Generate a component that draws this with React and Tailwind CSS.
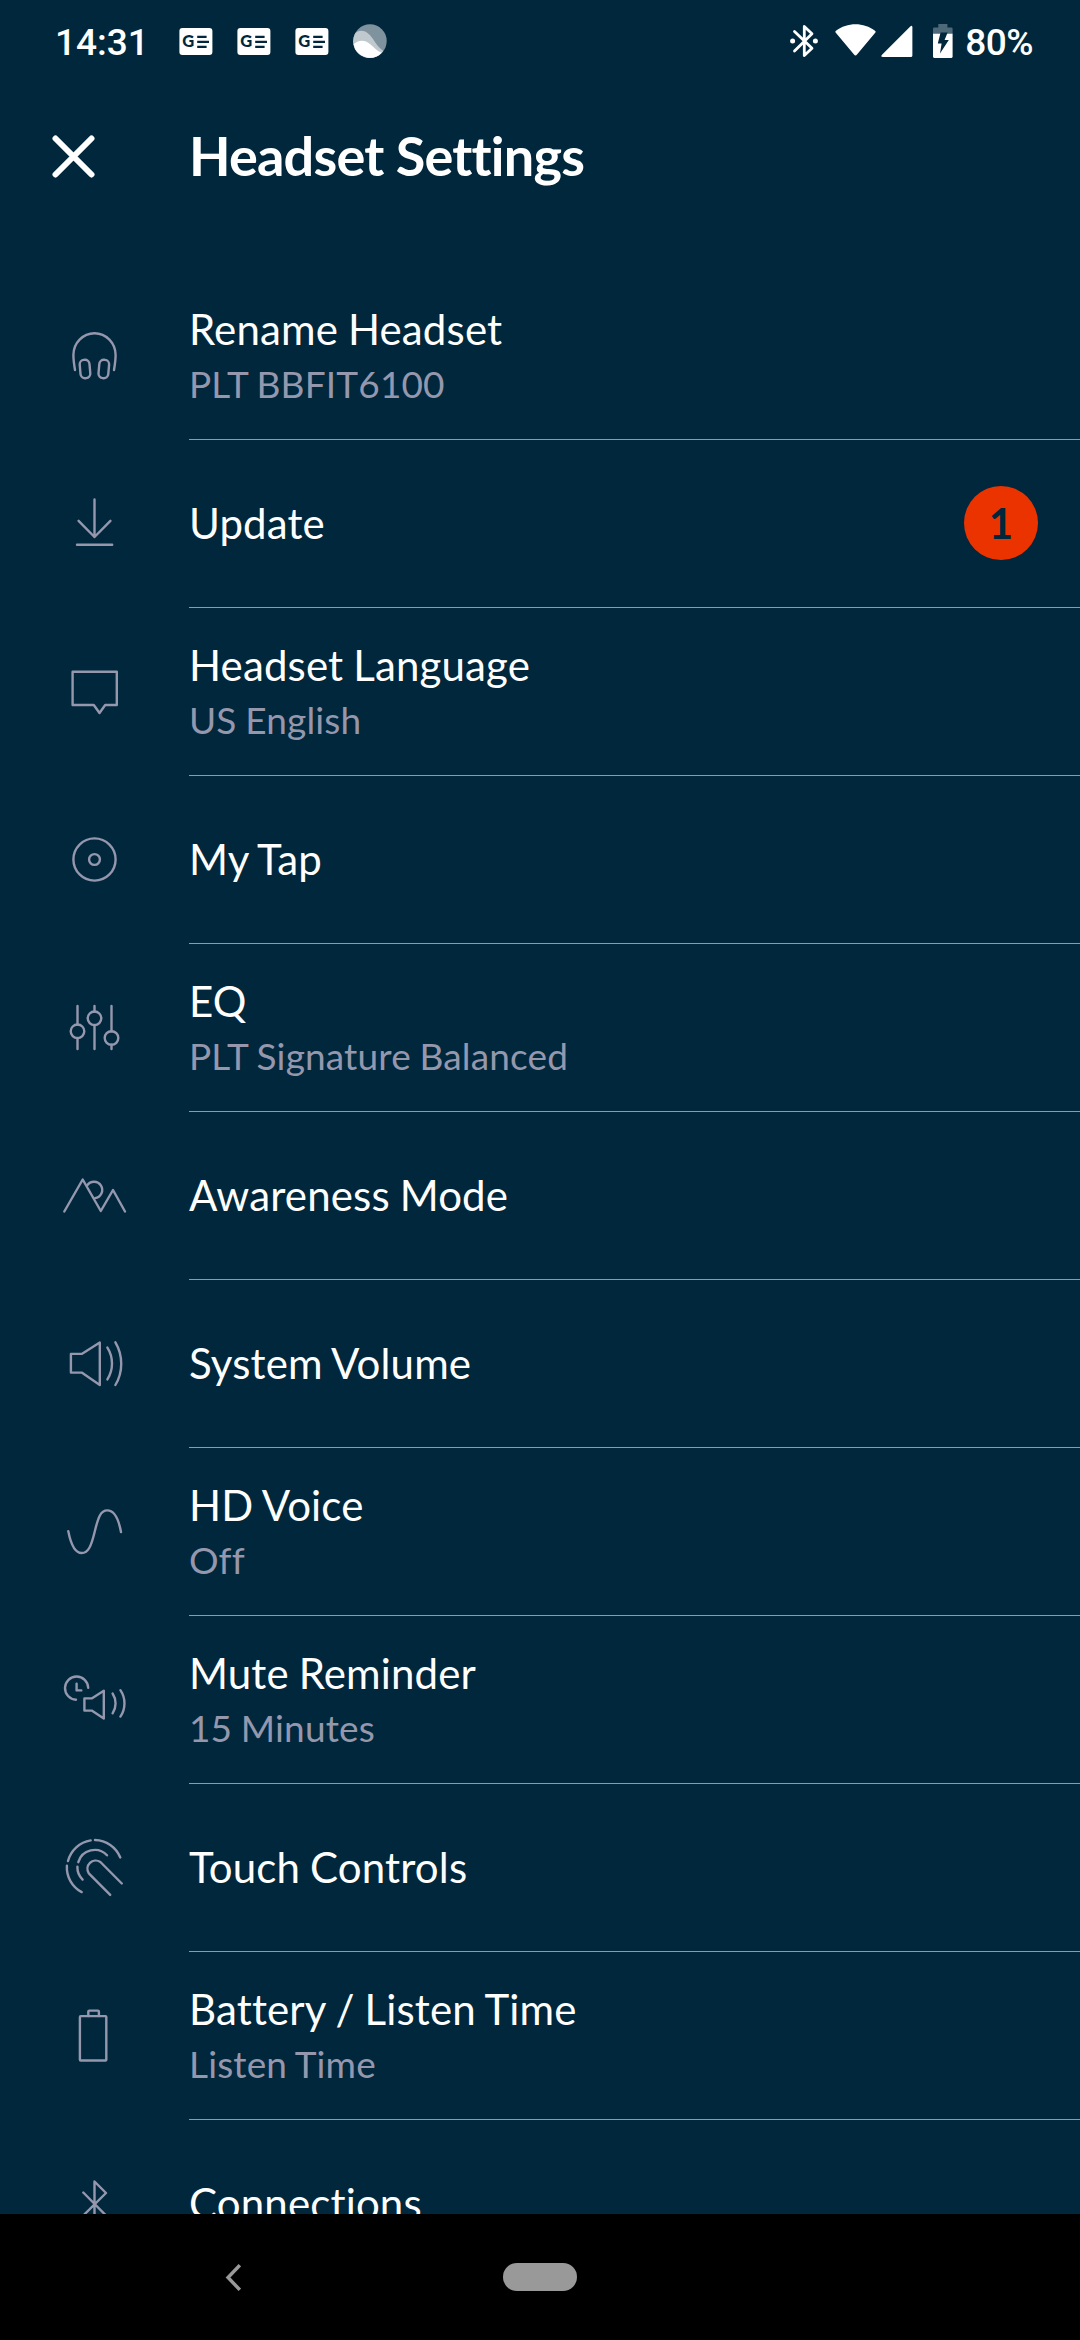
// ===== Row icons (72x72, thin outline) =====
function RowIcon({ children }) {
  return (
    <svg
      viewBox="0 0 72 72"
      className="w-[72px] h-[72px] text-[#9597ad]"
      fill="none"
      stroke="currentColor"
      strokeWidth="2.4"
      strokeLinecap="round"
      strokeLinejoin="round"
    >
      {children}
    </svg>
  );
}

const icons = {
  headset: (
    <RowIcon>
      <path d="M17 50C15.8 43 15.4 39 15.4 35A21.1 21.8 0 0 1 57.6 35C57.6 39 57.2 43 56 50" />
      <rect x="22.1" y="39.8" width="9.8" height="18.4" rx="4.5" transform="rotate(-5 27 49)" />
      <rect x="40.9" y="39.8" width="9.8" height="18.4" rx="4.5" transform="rotate(5 45.8 49)" />
    </RowIcon>
  ),
  download: (
    <RowIcon>
      <path d="M36.5 11.5V49M20.6 32.8L36.5 49L52.4 32.8M19 56.7H54.2" />
    </RowIcon>
  ),
  language: (
    <RowIcon>
      <path d="M14.6 15.7H58.8V49H47.2L41.5 57L35.8 49H14.6Z" />
    </RowIcon>
  ),
  tap: (
    <RowIcon>
      <circle cx="36.5" cy="35.5" r="21.1" />
      <circle cx="36.5" cy="35.5" r="5.4" />
    </RowIcon>
  ),
  eq: (
    <RowIcon>
      <path d="M19.5 14V32.5M19.5 46V57M36.5 14V19.5M36.5 33V57M53.5 14V39.3M53.5 52.7V57" />
      <circle cx="19.5" cy="39.3" r="6.8" />
      <circle cx="36.5" cy="26.3" r="6.8" />
      <circle cx="53.5" cy="46" r="6.8" />
    </RowIcon>
  ),
  awareness: (
    <RowIcon>
      <path d="M6.3 51.5L24.7 19.5L42.8 51L55 30L67 51.5" />
      <path d="M29.2 25.4A8.2 8.2 0 1 1 37 38.1" />
    </RowIcon>
  ),
  volume: (
    <RowIcon>
      <path d="M12.9 25.9H23.7L41.8 14.6V57L23.7 44.6H12.9Z" />
      <path d="M49.4 19.6A29.8 29.8 0 0 1 49.4 51.4M57.4 14.3A42 42 0 0 1 57.4 57" />
    </RowIcon>
  ),
  wave: (
    <RowIcon>
      <path d="M10.3 35.2C13 49 17 57 23.7 57S33.2 50 36.7 35.7 42.5 14.4 49.3 14.4S60.4 22 63 36" />
    </RowIcon>
  ),
  mute: (
    <RowIcon>
      <path d="M30.2 23.8A11.6 11.6 0 1 0 18 35.7M18.6 19.6V26.4H23.3" />
      <path d="M26.4 34.4H33.7L45.8 26.7V54.6L33.7 46.6H26.4Z" />
      <path d="M54.6 29.5A18 18 0 0 1 54.6 49.3M62.4 26.2A23.5 23.5 0 0 1 62.4 52.6" />
    </RowIcon>
  ),
  touch: (
    <RowIcon>
      <path d="M10 29A28 28 0 0 1 32.7 8.4M37 8A28 28 0 0 1 62.3 25.5M8.9 33.7A28 28 0 0 0 23.7 60.1" />
      <path d="M20.3 30.2A17 17 0 0 1 49 23.3M19.4 34.8A17 17 0 0 0 24.6 47.6" />
      <path d="M63.8 51.5L42.4 30A8.3 8.3 0 0 0 30.8 41.4L52.2 62.9" />
    </RowIcon>
  ),
  battery: (
    <RowIcon>
      <rect x="21.9" y="16.1" width="26.4" height="44.4" rx="0.8" />
      <path d="M30.3 16V11.6Q30.3 10.6 31.3 10.6H39.9Q40.9 10.6 40.9 11.6V16" />
    </RowIcon>
  ),
  bluetooth: (
    <RowIcon>
      <path d="M25.3 24.5L48 47.5L36.5 58.5V13.5L48 25L25.3 47.5" />
    </RowIcon>
  ),
};

const settings = [
  { icon: "headset", title: "Rename Headset", value: "PLT BBFIT6100" },
  { icon: "download", title: "Update", badge: 1 },
  { icon: "language", title: "Headset Language", value: "US English" },
  { icon: "tap", title: "My Tap" },
  { icon: "eq", title: "EQ", value: "PLT Signature Balanced" },
  { icon: "awareness", title: "Awareness Mode" },
  { icon: "volume", title: "System Volume" },
  { icon: "wave", title: "HD Voice", value: "Off" },
  { icon: "mute", title: "Mute Reminder", value: "15 Minutes" },
  { icon: "touch", title: "Touch Controls" },
  { icon: "battery", title: "Battery / Listen Time", value: "Listen Time" },
  { icon: "bluetooth", title: "Connections" },
];

function NewsIcon() {
  return (
    <svg viewBox="0 0 34 27" className="w-[34px] h-[27px]">
      <rect x="0.4" y="0" width="33" height="27" rx="3" fill="#fff" />
      <text
        x="3.2"
        y="19.4"
        fontFamily="Lato, sans-serif"
        fontWeight="900"
        fontSize="16.5"
        fill="#00273c"
      >
        G
      </text>
      <path d="M18.2 8.8H27.6M18.2 13.8H30M18.2 18.8H27.6" stroke="#00273c" strokeWidth="2.2" />
    </svg>
  );
}

function StatusBar() {
  return (
    <div className="flex items-center justify-between h-[82px] pl-[55px] pr-[47px] font-[Roboto,sans-serif] font-medium text-[37px] leading-none">
      <div className="flex items-center">
        <span className="w-[124px] pt-[3px]">14:31</span>
        <div className="flex gap-6">
          <NewsIcon />
          <NewsIcon />
          <NewsIcon />
        </div>
        <svg viewBox="0 0 34 34" className="ml-6 w-[34px] h-[34px]">
          <circle cx="17" cy="17" r="16.7" fill="#7f939e" />
          <path d="M2.2 9.2C9 4 15 8 20 15C23 20 26 24 30.4 27A16.7 16.7 0 0 1 2.2 9.2Z" fill="#bfc9ce" />
          <path d="M0.6 20C6 15.5 12 15.5 17 20C21 23.5 24 27 28.8 28.8A16.7 16.7 0 0 1 0.6 20Z" fill="#fff" />
        </svg>
      </div>

      <div className="flex items-center">
        <svg viewBox="0 0 28 34" className="w-[28px] h-[34px]" fill="none" stroke="#fff" strokeWidth="2.8" strokeLinejoin="round" strokeLinecap="round">
          <path d="M4.5 7.5L22 24.3L14.3 31.5V2.5L22 9.7L4.5 27" />
          <circle cx="2.6" cy="17" r="2.5" fill="#fff" stroke="none" />
          <circle cx="25.4" cy="17" r="2.5" fill="#fff" stroke="none" />
        </svg>
        <svg viewBox="0 0 41 34" className="ml-[17px] w-[41px] h-[34px]" fill="#fff">
          <path d="M0.8 8.8Q-0.2 7.6 1 6.8C12 -2 29 -2 40 6.8Q41.2 7.6 40.2 8.8L22 30.6Q20.5 32.4 19 30.6Z" />
        </svg>
        <svg viewBox="0 0 32 34" className="ml-[5px] w-[32px] h-[34px]" fill="#fff">
          <path d="M29 2.8Q31.4 0.6 31.4 3.4V31.4Q31.4 33 29.8 33H2Q-0.8 33 1 30.8Z" />
        </svg>
        <svg viewBox="0 0 20 34" className="ml-[20px] w-[20px] h-[34px]">
          <path d="M5.3 0H14.4V3.6H18.4Q19.6 3.6 19.6 4.8V10H0V4.8Q0 3.6 1.2 3.6H5.3Z" fill="#4d6877" />
          <path d="M0 9.8H19.6V32.6Q19.6 34 18.4 34H1.2Q0 34 0 32.6Z" fill="#fff" />
          <path d="M7.6 8.6H14.6L11.6 16H15.8L7 29.6L8.6 19.6H4.8Z" fill="#00273c" />
        </svg>
        <span className="ml-[12px] pt-[3px] tracking-[-0.5px]">80%</span>
      </div>
    </div>
  );
}

function SettingRow({ icon, title, value, badge }) {
  return (
    <li className="flex shrink-0 h-[168px]">
      <div className="flex items-center w-[189px] pl-[58px]">{icons[icon]}</div>
      <div className="flex flex-1 items-center justify-between pr-[42px] border-b border-[#8f99ad]">
        <div className="pb-[2px]">
          <p className="text-[42px] leading-[50px] tracking-[0.15px] [word-spacing:-1px]">{title}</p>
          {value && (
            <p className="mt-[8px] text-[37px] leading-[44px] tracking-[0.15px] [word-spacing:-1px] text-[#9597ad]">
              {value}
            </p>
          )}
        </div>
        {badge && (
          <span className="flex items-center justify-center w-[74px] h-[74px] mb-[1px] pb-[1px] rounded-full bg-[#eb3300] text-[42px] font-bold leading-none text-[#00273c]">
            {badge}
          </span>
        )}
      </div>
    </li>
  );
}

export default function App() {
  return (
    <div className="flex flex-col w-[1080px] h-[2340px] overflow-hidden bg-[#00273c] text-white font-[Lato,sans-serif] [font-variant-ligatures:none]">
      <StatusBar />

      {/* ===== Header ===== */}
      <header className="flex items-start h-[190px] shrink-0 pl-[52px]">
        <button className="mt-[53px] w-[137px]">
          <svg viewBox="0 0 43 43" className="w-[43px] h-[43px]" stroke="#fff" strokeWidth="6" strokeLinecap="round">
            <path d="M3.5 3.5L39.5 39.5M39.5 3.5L3.5 39.5" />
          </svg>
        </button>
        <h1 className="mt-[41px] text-[54px] leading-[65px] font-bold tracking-[-0.8px]">
          Headset Settings
        </h1>
      </header>

      {/* ===== Settings list ===== */}
      <ul className="flex flex-col h-[1942px] shrink-0 overflow-hidden">
        {settings.map((item) => (
          <SettingRow key={item.title} {...item} />
        ))}
      </ul>

      {/* ===== Navigation bar ===== */}
      <nav className="grid grid-cols-[503px_74px_1fr] items-center h-[126px] shrink-0 bg-black">
        <svg viewBox="0 0 16 27" className="ml-[225px] w-[16px] h-[27px]" fill="none" stroke="#999" strokeWidth="3.4">
          <path d="M14.8 1.2L3 13.5L14.8 25.8" />
        </svg>
        <span className="w-[74px] h-[28px] rounded-full bg-[#999999]" />
      </nav>
    </div>
  );
}
